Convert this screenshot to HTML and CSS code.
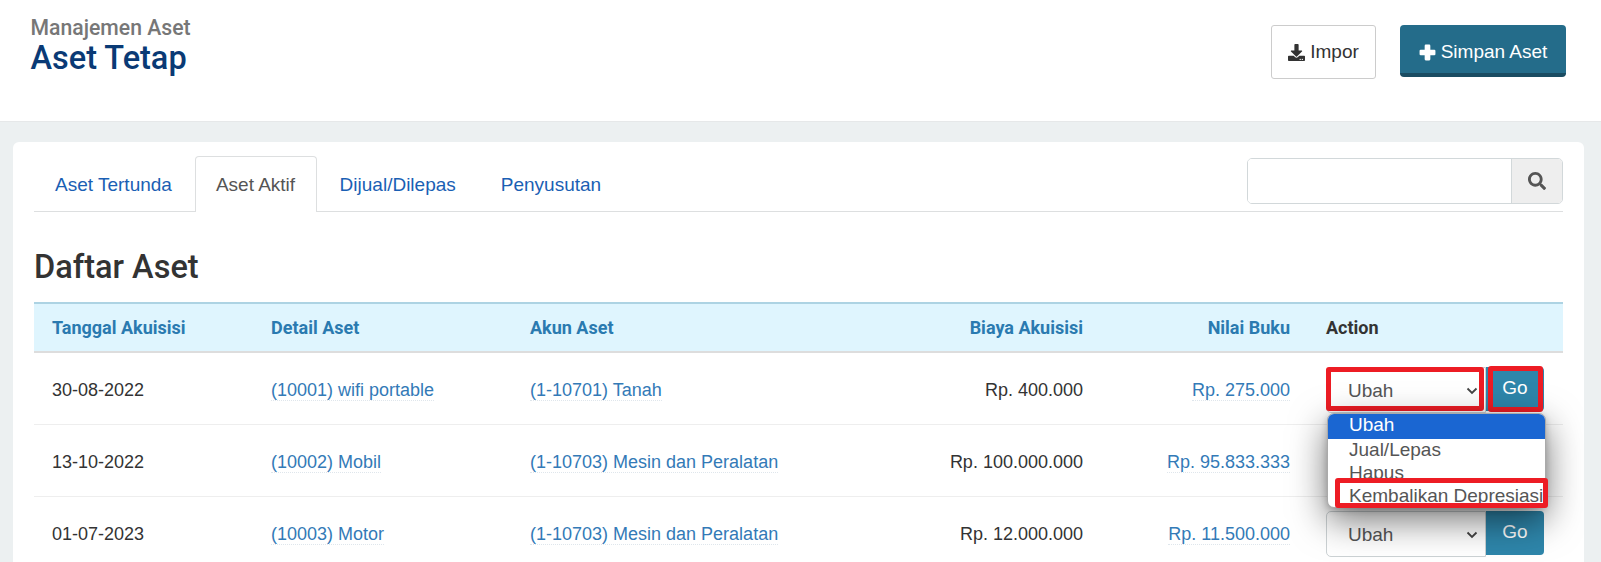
FILE: index.html
```html
<!DOCTYPE html>
<html lang="en">
<head>
    <meta charset="UTF-8">
    <title>Aset Tetap</title>
    <link rel="stylesheet" href="styles.css">
</head>
<body>
    <header class="page-head">
        <div class="titles">
            <div class="crumb">Manajemen Aset</div>
            <h1>Aset Tetap</h1>
        </div>
        <div class="head-actions">
            <a class="btn btn-plain">
                <svg class="ico" viewBox="0 0 512 512"><path d="M216 0h80c13.3 0 24 10.7 24 24v168h87.7c17.8 0 26.7 21.5 14.1 34.1L269.7 378.3c-7.5 7.5-19.8 7.5-27.3 0L90.1 226.1c-12.6-12.6-3.7-34.1 14.1-34.1H192V24c0-13.3 10.7-24 24-24zm296 376v112c0 13.3-10.7 24-24 24H24c-13.3 0-24-10.7-24-24V376c0-13.3 10.7-24 24-24h146.7l49 49c20.1 20.1 52.5 20.1 72.6 0l49-49H488c13.3 0 24 10.7 24 24zm-124 88c0-11-9-20-20-20s-20 9-20 20 9 20 20 20 20-9 20-20zm64 0c0-11-9-20-20-20s-20 9-20 20 9 20 20 20 20-9 20-20z"/></svg>
                Impor
            </a>
            <a class="btn btn-save">
                <svg class="ico" viewBox="0 0 15 15"><path d="M5 1.500a1 1 0 0 1 1-1h3a1 1 0 0 1 1 1V5h3.500a1 1 0 0 1 1 1v3a1 1 0 0 1-1 1H10v3.500a1 1 0 0 1-1 1H6a1 1 0 0 1-1-1V10H1.500a1 1 0 0 1-1-1V6a1 1 0 0 1 1-1H5z"/></svg>
                Simpan Aset
            </a>
        </div>
    </header>

    <main class="card">
        <div class="tabs">
            <a class="tab">Aset Tertunda</a>
            <a class="tab active">Aset Aktif</a>
            <a class="tab">Dijual/Dilepas</a>
            <a class="tab">Penyusutan</a>
            <div class="search">
                <input type="text">
                <span class="search-btn">
                    <svg viewBox="0 0 512 512"><path d="M505 442.7L405.3 343c-4.5-4.5-10.6-7-17-7H372c27.6-35.3 44-79.7 44-128C416 93.1 322.9 0 208 0S0 93.1 0 208s93.1 208 208 208c48.3 0 92.7-16.4 128-44v16.3c0 6.4 2.5 12.5 7 17l99.7 99.7c9.4 9.4 24.6 9.4 33.9 0l28.3-28.3c9.4-9.4 9.4-24.6.1-34zM208 336c-70.7 0-128-57.2-128-128 0-70.7 57.2-128 128-128 70.7 0 128 57.2 128 128 0 70.7-57.2 128-128 128z"/></svg>
                </span>
            </div>
        </div>

        <h2>Daftar Aset</h2>

        <table class="assets">
            <thead>
                <tr>
                    <th class="col-date">Tanggal Akuisisi</th>
                    <th class="col-detail">Detail Aset</th>
                    <th class="col-account">Akun Aset</th>
                    <th class="num col-cost">Biaya Akuisisi</th>
                    <th class="num col-book">Nilai Buku</th>
                    <th class="col-action">Action</th>
                </tr>
            </thead>
            <tbody>
                <tr>
                    <td>30-08-2022</td>
                    <td><a class="link">(10001) wifi portable</a></td>
                    <td><a class="link">(1-10701) Tanah</a></td>
                    <td class="num">Rp. 400.000</td>
                    <td class="num"><a class="link">Rp. 275.000</a></td>
                    <td class="action-cell">
                        <div class="action">
                            <div class="fake-select">Ubah<svg class="chev" viewBox="0 0 12 8"><path d="M1.5 1.5 6 6l4.500-4.500"/></svg></div>
                            <span class="go">Go</span>
                            <span class="mark mark-select"></span>
                            <span class="mark mark-go"></span>
                            <div class="menu">
                                <div class="opt selected">Ubah</div>
                                <div class="opt">Jual/Lepas</div>
                                <div class="opt">Hapus</div>
                                <div class="opt">Kembalikan Depresiasi</div>
                                <span class="mark mark-opt"></span>
                            </div>
                        </div>
                    </td>
                </tr>
                <tr>
                    <td>13-10-2022</td>
                    <td><a class="link">(10002) Mobil</a></td>
                    <td><a class="link">(1-10703) Mesin dan Peralatan</a></td>
                    <td class="num">Rp. 100.000.000</td>
                    <td class="num"><a class="link">Rp. 95.833.333</a></td>
                    <td class="action-cell"></td>
                </tr>
                <tr>
                    <td>01-07-2023</td>
                    <td><a class="link">(10003) Motor</a></td>
                    <td><a class="link">(1-10703) Mesin dan Peralatan</a></td>
                    <td class="num">Rp. 12.000.000</td>
                    <td class="num"><a class="link">Rp. 11.500.000</a></td>
                    <td class="action-cell">
                        <div class="action">
                            <div class="fake-select">Ubah<svg class="chev" viewBox="0 0 12 8"><path d="M1.5 1.5 6 6l4.500-4.500"/></svg></div>
                            <span class="go">Go</span>
                        </div>
                    </td>
                </tr>
            </tbody>
        </table>
    </main>
</body>
</html>
```

FILE: styles.css
```css
html, body {
    margin: 0;
    height: 562px;
    overflow: hidden;
}
body {
    font-family: "Liberation Sans", Arial, sans-serif;
    font-size: 18px;
    color: #333;
    background-color: #ecf0f1;
}

.page-head {
    display: flex;
    justify-content: space-between;
    height: 122px;
    padding: 0 35px 0 30.5px;
    box-sizing: border-box;
    background-color: #fff;
    border-bottom: 1px solid #e6e8e9;
}
.titles {
    padding-top: 16px;
}
.crumb {
    font-family: Roboto, sans-serif;
    font-weight: 500;
    font-size: 21.2px;
    line-height: 24px;
    color: #777;
}
h1 {
    margin: 0;
    font-family: Roboto, sans-serif;
    font-weight: 500;
    font-size: 32.5px;
    line-height: 36px;
    color: #0a3a75;
}
.head-actions {
    display: flex;
    align-items: flex-start;
    gap: 24px;
    padding-top: 25px;
}
.btn {
    display: flex;
    align-items: center;
    justify-content: center;
    gap: 5px;
    box-sizing: border-box;
    border-radius: 3px;
    font-size: 19px;
}
.btn-plain {
    width: 105px;
    height: 54px;
    border: 1px solid #ccc;
    background-color: #fff;
    color: #333;
}
.btn-save {
    width: 166px;
    height: 52px;
    padding-top: 6px;
    color: #fff;
    background-color: #246c8a;
    border-bottom: 4px solid #1a4c62;
    border-radius: 4px;
}
.ico {
    width: 17px;
    height: 17px;
    fill: currentColor;
}

.card {
    margin: 20px 17px 0 13px;
    padding: 15px 21px 0 21px;
    height: 405px;
    overflow: hidden;
    background-color: #fff;
    border-radius: 6px 6px 0 0;
}

.tabs {
    display: flex;
    align-items: flex-end;
    height: 55px;
    box-sizing: border-box;
    border-bottom: 1px solid #dddfe0;
}
.tab {
    height: 55px;
    box-sizing: border-box;
    margin-bottom: -1px;
    padding: 0 22.5px;
    line-height: 56px;
    font-size: 19px;
    color: #1a5fb4;
    border-radius: 4px 4px 0 0;
}
.tab:first-child {
    padding: 0 23px 0 21px;
}
.tab.active {
    color: #555;
    background-color: #fff;
    border: 1px solid #dddfe0;
    border-bottom: 0;
    padding: 0 21px 0 20px;
    height: 56px;
}
.search {
    display: flex;
    width: 316px;
    height: 46px;
    margin-left: auto;
    margin-bottom: 7px;
    box-sizing: border-box;
    border: 1px solid #d2d8da;
    border-radius: 5px;
    overflow: hidden;
}
.search input {
    flex: 1;
    min-width: 0;
    border: 0;
    outline: 0;
}
.search-btn {
    display: flex;
    align-items: center;
    justify-content: center;
    width: 50px;
    background-color: #eee;
    border-left: 1px solid #d2d8da;
}
.search-btn svg {
    width: 18px;
    height: 18px;
    fill: #555;
}

h2 {
    margin: 0;
    padding-top: 35px;
    height: 55px;
    font-family: Roboto, sans-serif;
    font-weight: 500;
    font-size: 32.5px;
    line-height: 40px;
    color: #333;
}

.assets {
    width: 1529px;
    table-layout: fixed;
    border-collapse: collapse;
}
.assets th {
    height: 49px;
    padding: 0 18px;
    box-sizing: border-box;
    text-align: left;
    font-family: Roboto, sans-serif;
    font-weight: 700;
    font-size: 18px;
    color: #2a7ab0;
    background-color: #dff5fe;
    border-top: 2px solid #add3e3;
    border-bottom: 2px solid #ddd;
}
.assets th.col-action {
    color: #333;
}
.assets th.num, .assets td.num {
    text-align: right;
}
.col-date { width: 219px; }
.col-detail { width: 259px; }
.col-account { width: 300px; }
.col-cost { width: 289px; }
.col-book { width: 207px; }
.col-action { width: 255px; }
.assets td {
    height: 72px;
    padding: 4px 18px 0;
    box-sizing: border-box;
    border-bottom: 1px solid #eee;
}
.link {
    color: #337ab7;
    border-bottom: 1px dotted #dfe6ec;
}

.action {
    position: relative;
    display: flex;
    width: 218px;
}
.fake-select {
    position: relative;
    width: 160px;
    height: 46px;
    box-sizing: border-box;
    padding-left: 21px;
    line-height: 46px;
    font-size: 19px;
    color: #555;
    background-color: #fff;
    border: 1px solid #ccd2d4;
    border-radius: 5px 0 0 5px;
}
.chev {
    position: absolute;
    right: 7px;
    top: 19px;
    width: 12px;
    height: 8px;
    fill: none;
    stroke: #444;
    stroke-width: 1.8;
}
.go {
    width: 58px;
    height: 44px;
    line-height: 42px;
    text-align: center;
    font-size: 19px;
    color: #fff;
    background-color: #2e86ab;
    border-radius: 0 4px 4px 0;
}

.menu {
    position: absolute;
    left: 1px;
    top: 46px;
    z-index: 2;
    width: 219px;
    height: 95px;
    box-sizing: border-box;
    border: 1px solid #aaa;
    border-radius: 7px;
    background-color: #fff;
    box-shadow: 0 12px 36px rgba(0, 0, 0, .55), 0 2px 6px rgba(0, 0, 0, .2);
}
.opt {
    height: 23px;
    padding-left: 21px;
    font-size: 19px;
    line-height: 21px;
    color: #555;
    white-space: nowrap;
}
.opt.selected {
    height: 25px;
    line-height: 21px;
    color: #fff;
    background-color: #1a66d2;
    border-radius: 6px 6px 0 0;
}

.mark {
    position: absolute;
    box-sizing: border-box;
    border: 5px solid #ed1c24;
    border-radius: 3px;
}
.mark-select {
    left: 0;
    top: 0;
    width: 158px;
    height: 44px;
}
.mark-go {
    left: 162px;
    top: -1px;
    width: 55px;
    height: 46px;
}
.mark-opt {
    left: 7px;
    top: 64px;
    width: 213px;
    height: 30px;
}
```
